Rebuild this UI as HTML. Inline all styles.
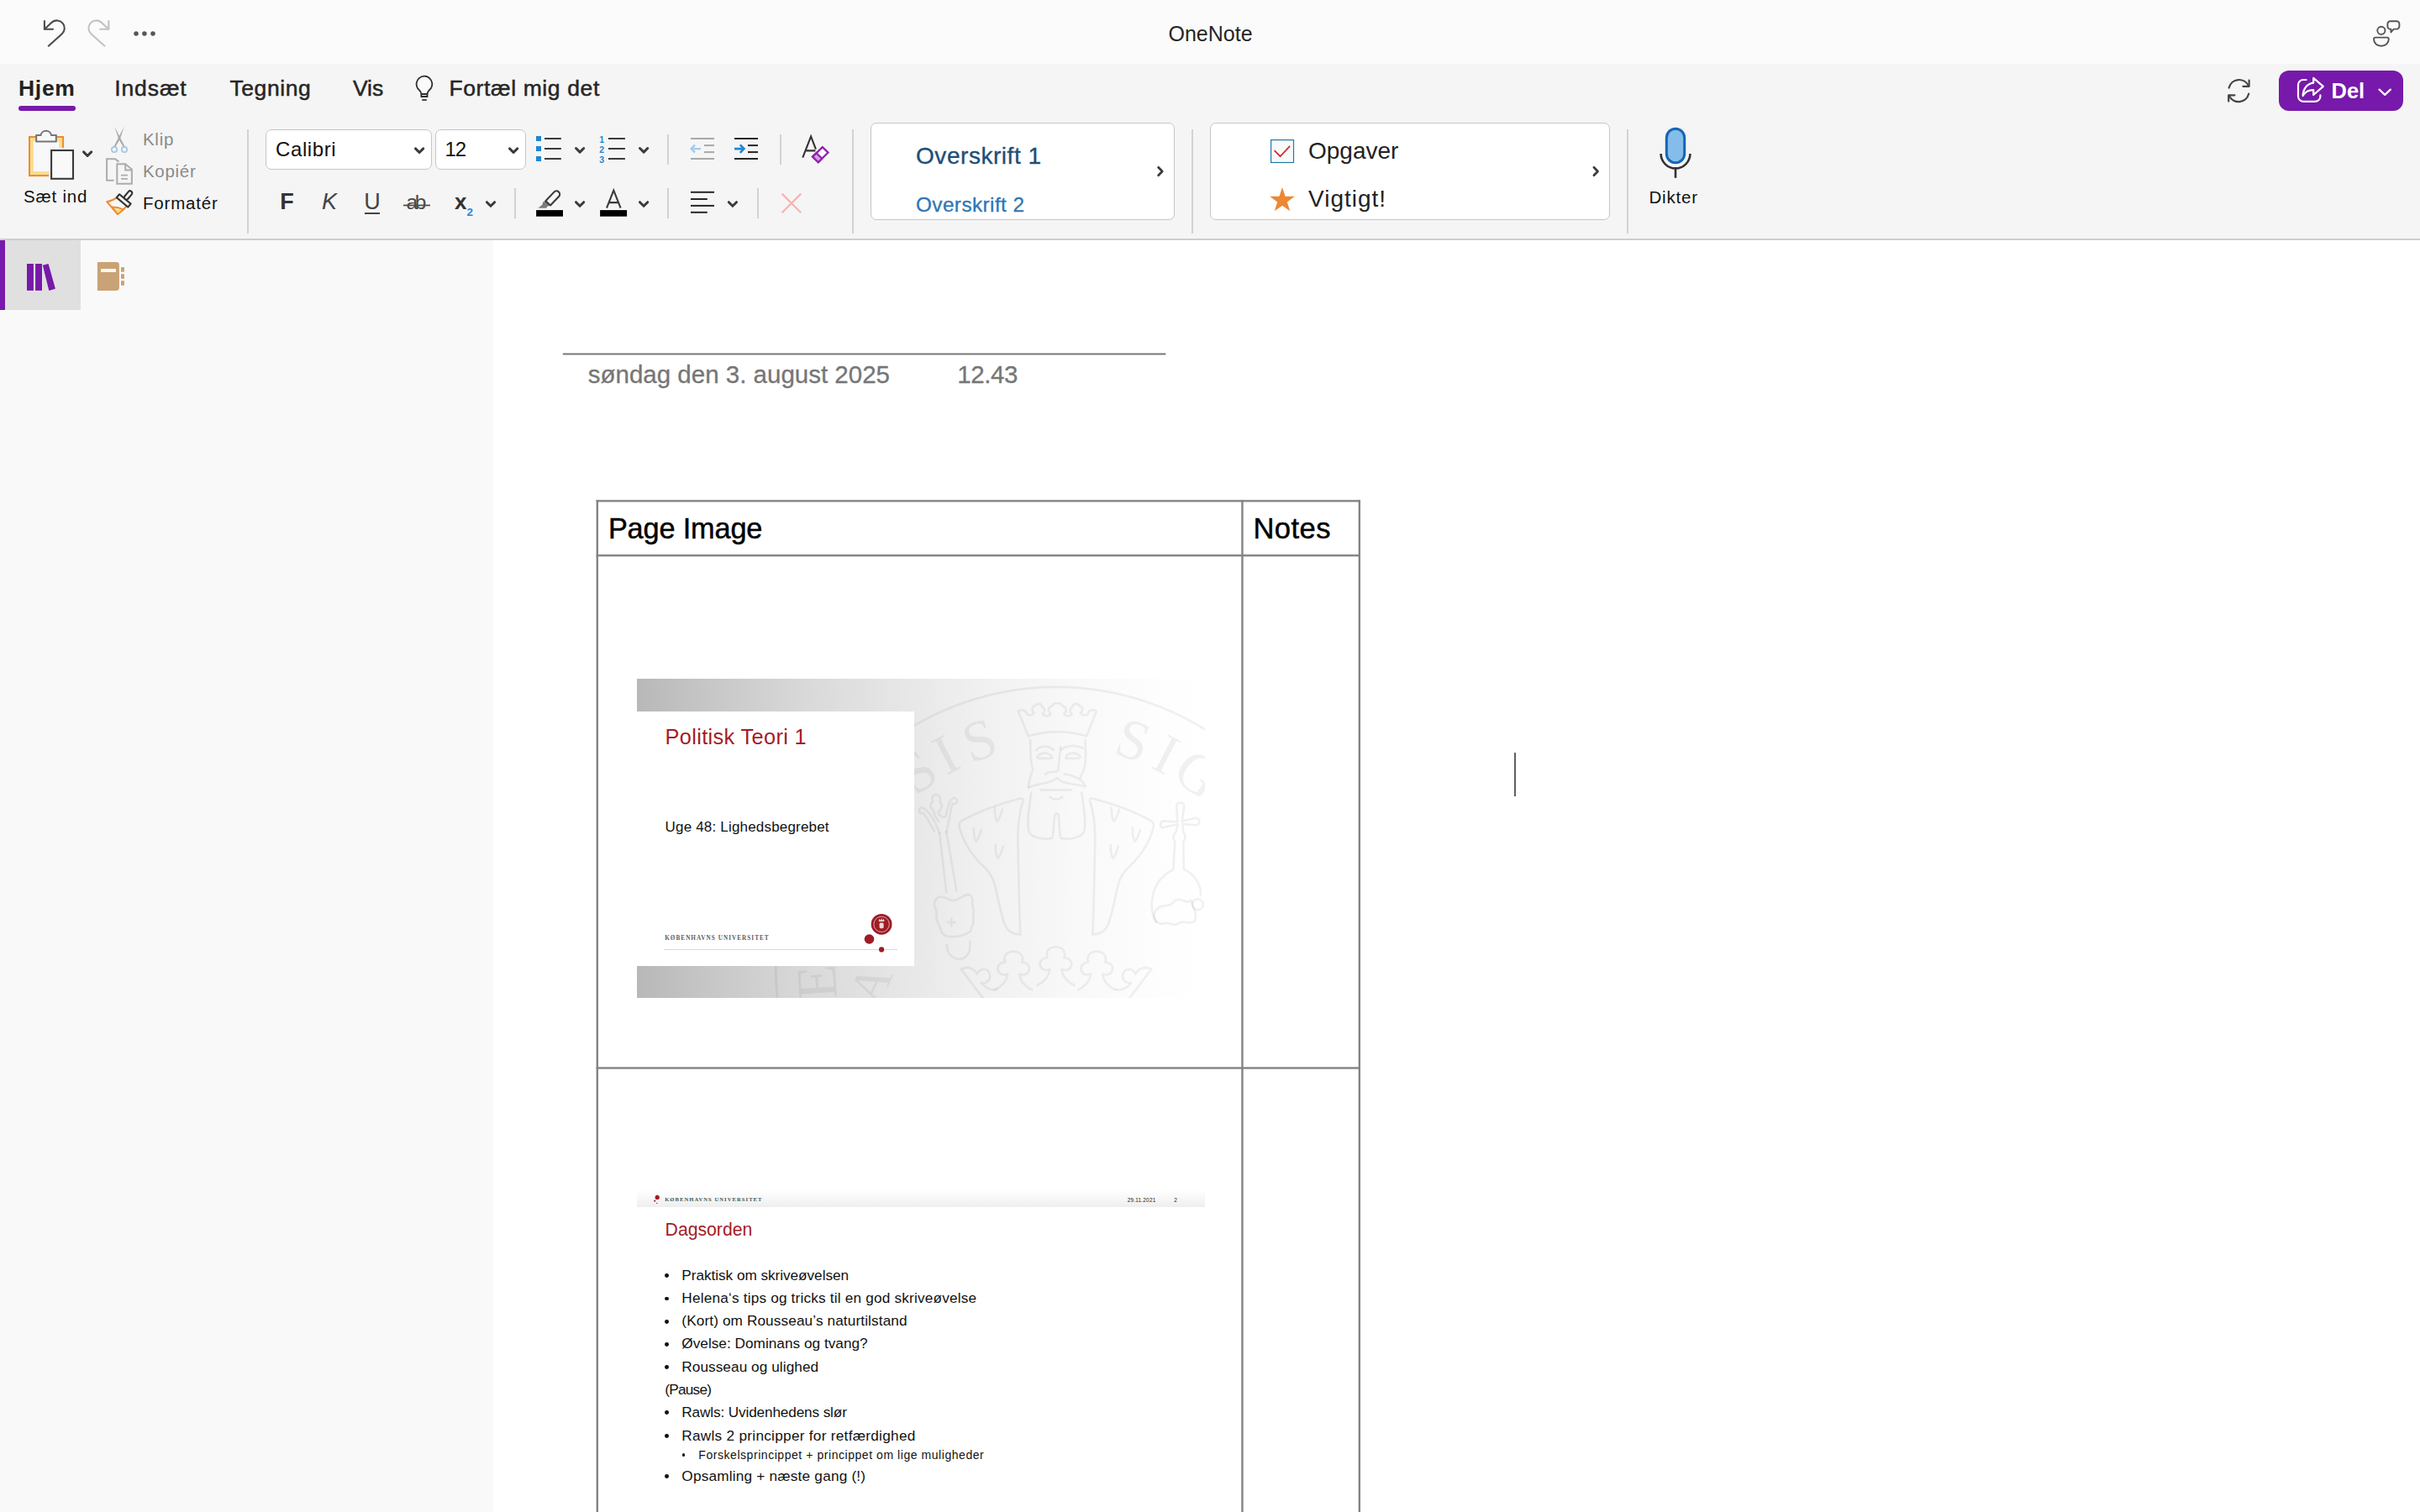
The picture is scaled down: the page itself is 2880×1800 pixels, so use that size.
<!DOCTYPE html>
<html lang="da"><head><meta charset="utf-8"><title>OneNote</title>
<style>
html,body{margin:0;padding:0;}
body{width:2880px;height:1800px;overflow:hidden;background:#fff;position:relative;font-family:"Liberation Sans",sans-serif;}
.t{position:absolute;white-space:nowrap;}
.b{position:absolute;box-sizing:border-box;}
svg{position:absolute;left:0;top:0;overflow:visible;}
.serif{font-family:"Liberation Serif",serif;}
@media (max-width:2000px){body{zoom:0.5;}}
</style></head><body>
<div class="b" style="left:0px;top:0px;width:2880px;height:76px;background:#fbfbfb;"></div>
<div class="b" style="left:0px;top:76px;width:2880px;height:208px;background:#f5f5f5;"></div>
<div class="b" style="left:0px;top:284px;width:2880px;height:2px;background:#cdcdcd;"></div>
<div class="b" style="left:0px;top:286px;width:587px;height:1514px;background:#f9f9f9;"></div>
<div class="b" style="left:0px;top:286px;width:96px;height:83px;background:#e0e0e0;"></div>
<div class="b" style="left:0px;top:286px;width:6px;height:83px;background:#7719aa;"></div>
<div class="t " style="left:1390.50px;top:28.44px;font-size:25px;line-height:25px;color:#262626;">OneNote</div>
<div class="t " style="left:22.00px;top:91.57px;font-size:26.5px;line-height:26.5px;color:#222;font-weight:bold;letter-spacing:0.7px;">Hjem</div>
<div class="b" style="left:22px;top:126px;width:68px;height:6px;background:#7719aa;border-radius:3px;"></div>
<div class="t " style="left:136.20px;top:91.57px;font-size:26.5px;line-height:26.5px;color:#262626;letter-spacing:0.9px;-webkit-text-stroke:0.5px #262626;">Indsæt</div>
<div class="t " style="left:273.40px;top:91.57px;font-size:26.5px;line-height:26.5px;color:#262626;letter-spacing:0.6px;-webkit-text-stroke:0.5px #262626;">Tegning</div>
<div class="t " style="left:419.90px;top:91.57px;font-size:26.5px;line-height:26.5px;color:#262626;-webkit-text-stroke:0.5px #262626;">Vis</div>
<div class="t " style="left:534.40px;top:91.57px;font-size:26.5px;line-height:26.5px;color:#262626;letter-spacing:0.62px;-webkit-text-stroke:0.5px #262626;">Fortæl mig det</div>
<div class="t " style="left:28.00px;top:224.25px;font-size:20.5px;line-height:20.5px;color:#111;letter-spacing:0.8px;">Sæt ind</div>
<div class="t " style="left:170.00px;top:156.45px;font-size:20.5px;line-height:20.5px;color:#8a8a8a;letter-spacing:0.7px;">Klip</div>
<div class="t " style="left:170.00px;top:193.65px;font-size:20.5px;line-height:20.5px;color:#8a8a8a;letter-spacing:0.7px;">Kopiér</div>
<div class="t " style="left:170.00px;top:231.95px;font-size:20.5px;line-height:20.5px;color:#111;letter-spacing:0.8px;">Formatér</div>
<div class="b" style="left:294px;top:154px;width:2px;height:124px;background:#d2d2d2;"></div>
<div class="b" style="left:316px;top:154px;width:198px;height:48px;background:#fff;border:1.5px solid #c6c6c6;border-radius:7px;"></div>
<div class="b" style="left:518px;top:154px;width:108px;height:48px;background:#fff;border:1.5px solid #c6c6c6;border-radius:7px;"></div>
<div class="t " style="left:328.00px;top:165.68px;font-size:24px;line-height:24px;color:#111;letter-spacing:0.6px;">Calibri</div>
<div class="t " style="left:529.60px;top:165.68px;font-size:24px;line-height:24px;color:#111;letter-spacing:-1.2px;">12</div>
<div class="t " style="left:333.20px;top:226.94px;font-size:27px;line-height:27px;color:#333;font-weight:bold;">F</div>
<div class="t " style="left:383.00px;top:226.94px;font-size:27px;line-height:27px;color:#444;font-style:italic;">K</div>
<div class="t " style="left:433.20px;top:226.94px;font-size:27px;line-height:27px;color:#444;">U</div>
<div class="b" style="left:434px;top:252.5px;width:18px;height:2px;background:#444;"></div>
<div class="t " style="left:483.60px;top:228.66px;font-size:24.5px;line-height:24.5px;color:#4a4a4a;letter-spacing:-3.45px;">ab</div>
<svg width="2880" height="300" viewBox="0 0 2880 300"><rect x="480" y="243.6" width="32" height="1.7" fill="#4a4a4a"/></svg>
<div class="t " style="left:541.00px;top:227.49px;font-size:26px;line-height:26px;color:#333;font-weight:bold;">x</div>
<div class="t " style="left:555.50px;top:246.17px;font-size:13.5px;line-height:13.5px;color:#2b88d8;font-weight:bold;">2</div>
<div class="b" style="left:612px;top:224px;width:2px;height:36px;background:#d2d2d2;"></div>
<div class="b" style="left:794px;top:160px;width:2px;height:36px;background:#d2d2d2;"></div>
<div class="b" style="left:794px;top:224px;width:2px;height:36px;background:#d2d2d2;"></div>
<div class="b" style="left:928px;top:160px;width:2px;height:36px;background:#d2d2d2;"></div>
<div class="b" style="left:900.5px;top:224px;width:2px;height:36px;background:#d2d2d2;"></div>
<div class="b" style="left:1014px;top:154px;width:2px;height:124px;background:#d2d2d2;"></div>
<div class="b" style="left:1418px;top:154px;width:2px;height:124px;background:#d2d2d2;"></div>
<div class="b" style="left:1936px;top:154px;width:2px;height:124px;background:#d2d2d2;"></div>
<div class="b" style="left:1036px;top:146px;width:362px;height:116px;background:#fff;border:1.5px solid #c6c6c6;border-radius:7px;"></div>
<div class="t " style="left:1090.00px;top:172.10px;font-size:28px;line-height:28px;color:#1e4e79;letter-spacing:0.55px;-webkit-text-stroke:0.35px #1e4e79;">Overskrift 1</div>
<div class="t " style="left:1090.00px;top:232.03px;font-size:24.3px;line-height:24.3px;color:#2e75b5;letter-spacing:0.432px;-webkit-text-stroke:0.3px #2e75b5;">Overskrift 2</div>
<div class="b" style="left:1440px;top:146px;width:476px;height:116px;background:#fff;border:1.5px solid #c6c6c6;border-radius:7px;"></div>
<div class="t " style="left:1557.00px;top:165.80px;font-size:28px;line-height:28px;color:#222;">Opgaver</div>
<div class="t " style="left:1557.00px;top:222.80px;font-size:28px;line-height:28px;color:#222;letter-spacing:1.0px;">Vigtigt!</div>
<div class="t " style="left:1962.50px;top:224.55px;font-size:20.5px;line-height:20.5px;color:#111;letter-spacing:0.8px;">Dikter</div>
<div class="b" style="left:2712px;top:84px;width:148px;height:48px;background:#7719aa;border-radius:12px;"></div>
<div class="t " style="left:2774.50px;top:96.21px;font-size:25.5px;line-height:25.5px;color:#fff;font-weight:bold;">Del</div>
<svg width="2880" height="400" viewBox="0 0 2880 400" fill="none"><path d="M52.9 24.3 V34.8 H63.8" stroke="#4a4a4a" stroke-width="2.1"/>
<path d="M53.5 34.3 L61.7 26.6 A9.1 9.1 0 0 1 73.6 40.5 L57.2 55.2" stroke="#4a4a4a" stroke-width="2.1" stroke-linejoin="round"/>
<path d="M129.3 24.3 V34.8 H118.4" stroke="#c2c2c2" stroke-width="2.1"/>
<path d="M128.7 34.3 L120.5 26.6 A9.1 9.1 0 0 0 108.6 40.5 L125 55.2" stroke="#c2c2c2" stroke-width="2.1" stroke-linejoin="round"/>
<circle cx="162" cy="40.1" r="2.75" fill="#555"/>
<circle cx="171.9" cy="40.1" r="2.75" fill="#555"/>
<circle cx="182" cy="40.1" r="2.75" fill="#555"/>
<path d="M501.4 112 C501.2 108.8 498.9 107.5 497.29 105.41 A9.35 9.35 0 1 1 512.61 105.41 C511 107.5 508.7 108.8 508.5 112 Z" fill="#fafafa" stroke="#2e2e2e" stroke-width="1.8" stroke-linejoin="round"/>
<path d="M501.4 112 V115 H508.5 V112" stroke="#2e2e2e" stroke-width="1.8" stroke-linejoin="miter"/>
<path d="M502.2 119 H507.9" stroke="#2e2e2e" stroke-width="1.7"/>
<rect x="35" y="163" width="40.1" height="46.1" fill="#f9dc8f" stroke="#ee8a2f" stroke-width="2"/>
<rect x="39.9" y="168.1" width="30.4" height="36" fill="#f8f8f8"/>
<path d="M43.2 168.6 V161.1 H48.5 A6.4 6.4 0 0 1 61.1 161.1 H66.8 V168.6 Z" fill="#f8f8f8" stroke="#757575" stroke-width="2" stroke-linejoin="miter"/>
<rect x="58" y="175.9" width="32" height="40" fill="#f5f5f5"/>
<rect x="61.1" y="179" width="25.9" height="33.8" fill="#f9f9f9" stroke="#3a3a3a" stroke-width="2.1"/>
<path d="M99.50 180.90 L104.10 185.50 L108.70 180.90" stroke="#3a3a3a" stroke-width="3.0" stroke-linecap="round" stroke-linejoin="round"/>
<path d="M136.1 150.6 L148.6 174.6 L146.9 175.2 L141.2 165.5 Z" fill="#a9a9a9"/>
<path d="M147.9 150.6 L135.4 174.6 L137.1 175.2 L142.8 165.5 Z" fill="#a9a9a9"/>
<circle cx="136" cy="178.1" r="3.2" stroke="#9fc6e6" stroke-width="1.6"/>
<circle cx="148" cy="178.1" r="3.2" stroke="#9fc6e6" stroke-width="1.6"/>
<path d="M141.4 192.6 L137.2 189.2 H127.1 V214.7 H135.6" stroke="#acacac" stroke-width="2" stroke-linejoin="miter"/>
<path d="M139.3 195.2 H149.2 L156.9 201.6 V218.8 H139.3 Z" stroke="#acacac" stroke-width="2" stroke-linejoin="miter" fill="#f5f5f5"/>
<path d="M149.2 195.2 V202.6 H156.9" stroke="#acacac" stroke-width="2"/>
<path d="M144 208.6 H151.9 M144 212.8 H151.9" stroke="#acacac" stroke-width="1.8"/>
<path d="M140.1 234.6 C134.5 238.5 131 239.6 127.2 240.2 L140 255 C144 252.5 147.5 249.5 150.3 245.6" stroke="#ee8a2f" stroke-width="2" stroke-linejoin="round" fill="#f8f8f8"/>
<path d="M133.6 246.4 C138 246.3 142.5 247.2 146.6 249.3 C144.7 251.3 142.5 253.2 140 254.8 Z" fill="#f9dc8f" stroke="#ee8a2f" stroke-width="1.6" stroke-linejoin="round"/>
<g transform="translate(147.2 238.9) rotate(40)"><rect x="-8.8" y="-2.6" width="17.6" height="5.2" fill="#f6f6f6" stroke="#333" stroke-width="2.1" stroke-linejoin="round"/><rect x="-2.5" y="-14.2" width="5" height="11.6" rx="2.3" fill="#f6f6f6" stroke="#333" stroke-width="2.1"/></g>
<path d="M494.50 176.90 L499.10 181.50 L503.70 176.90" stroke="#3a3a3a" stroke-width="3.0" stroke-linecap="round" stroke-linejoin="round"/>
<path d="M606.50 176.90 L611.10 181.50 L615.70 176.90" stroke="#3a3a3a" stroke-width="3.0" stroke-linecap="round" stroke-linejoin="round"/>
<rect x="638" y="162" width="6" height="6" fill="#1e88d2"/>
<rect x="648" y="164" width="19.8" height="2" fill="#3a3a3a"/>
<rect x="724" y="164" width="19.9" height="2" fill="#3a3a3a"/>
<rect x="638" y="174" width="6" height="6" fill="#1e88d2"/>
<rect x="648" y="176" width="19.8" height="2" fill="#3a3a3a"/>
<rect x="724" y="176" width="19.9" height="2" fill="#3a3a3a"/>
<rect x="638" y="186" width="6" height="6" fill="#1e88d2"/>
<rect x="648" y="188" width="19.8" height="2" fill="#3a3a3a"/>
<rect x="724" y="188" width="19.9" height="2" fill="#3a3a3a"/>
<path d="M685.50 176.50 L690.10 181.10 L694.70 176.50" stroke="#3a3a3a" stroke-width="3.0" stroke-linecap="round" stroke-linejoin="round"/>
<path d="M761.50 176.50 L766.10 181.10 L770.70 176.50" stroke="#3a3a3a" stroke-width="3.0" stroke-linecap="round" stroke-linejoin="round"/>
<rect x="822" y="164" width="28" height="2" fill="#a8a8a8"/>
<rect x="838" y="172.1" width="12" height="2" fill="#a8a8a8"/>
<rect x="838" y="180.1" width="12" height="2" fill="#a8a8a8"/>
<rect x="822" y="188" width="28" height="2" fill="#a8a8a8"/>
<rect x="874" y="164" width="28" height="2" fill="#262626"/>
<rect x="890" y="172.1" width="12" height="2" fill="#262626"/>
<rect x="890" y="180.1" width="12" height="2" fill="#262626"/>
<rect x="874" y="188" width="28" height="2" fill="#262626"/>
<path d="M834 177.1 H823.2 M827 172.6 L822.6 177.1 L827 181.6" stroke="#a4cbec" stroke-width="2.3" stroke-linejoin="miter"/>
<path d="M874 177.1 H884.8 M880.8 172.4 L885.5 177.1 L880.8 181.8" stroke="#1e88d2" stroke-width="2.6" stroke-linejoin="miter"/>
<path d="M955.3 187.6 L965.1 162.4 L970.9 177.6 M959.4 179.4 H970.4" stroke="#333" stroke-width="2.1" stroke-linejoin="miter"/>
<path d="M978.8 175.2 L985.5 181.6 L973.8 193.2 L967.1 186.6 Z" fill="#fdfdfd" stroke="#8e24aa" stroke-width="2.3" stroke-linejoin="miter"/>
<path d="M971.6 182.2 L978.2 188.8 L973.8 193.2 L967.1 186.6 Z" fill="#dc9be6" stroke="#8e24aa" stroke-width="2.3" stroke-linejoin="miter"/>
<path d="M579.40 240.70 L584.00 245.30 L588.60 240.70" stroke="#3a3a3a" stroke-width="3.0" stroke-linecap="round" stroke-linejoin="round"/>
<rect x="637.2" y="249.2" width="33.8" height="9.4" fill="#fafafa"/>
<rect x="638.1" y="250.1" width="31.9" height="7.6" fill="#000"/>
<path d="M648.8 238.9 L654.8 244.5 L650.9 246 L650.6 247.7 L640.4 247.7 L645.3 243.8 L646.3 240.6 Z" fill="#7c7c7c"/>
<g transform="translate(658.5 235.2) rotate(43.5)"><path d="M-3.9 9.2 V-5.4 A3.9 3.9 0 0 1 3.9 -5.4 V9.2 Z" fill="#f8f8f8" stroke="#3a3a3a" stroke-width="2.1" stroke-linejoin="round"/></g>
<path d="M685.50 240.70 L690.10 245.30 L694.70 240.70" stroke="#3a3a3a" stroke-width="3.0" stroke-linecap="round" stroke-linejoin="round"/>
<rect x="713.2" y="249.2" width="33.8" height="9.4" fill="#fafafa"/>
<rect x="714.1" y="250.1" width="32" height="7.6" fill="#000"/>
<path d="M722 247.7 L730.3 226.6 L738.6 247.7 M724.9 241.1 H735.7" stroke="#3a3a3a" stroke-width="2.1" stroke-linejoin="miter"/>
<path d="M761.50 240.70 L766.10 245.30 L770.70 240.70" stroke="#3a3a3a" stroke-width="3.0" stroke-linecap="round" stroke-linejoin="round"/>
<rect x="822" y="227.8" width="28" height="2" fill="#262626"/>
<rect x="822" y="236" width="19.8" height="2" fill="#262626"/>
<rect x="822" y="243.9" width="28" height="2" fill="#262626"/>
<rect x="822" y="251.8" width="19.8" height="2" fill="#262626"/>
<path d="M867.30 240.70 L871.90 245.30 L876.50 240.70" stroke="#3a3a3a" stroke-width="3.0" stroke-linecap="round" stroke-linejoin="round"/>
<path d="M930.6 230.6 L953.2 253.2 M953.2 230.6 L930.6 253.2" stroke="#f5b5b1" stroke-width="2.2"/>
<path d="M1378.60 199.30 L1383.20 204.00 L1378.60 208.70" stroke="#3a3a3a" stroke-width="2.7" stroke-linecap="round" stroke-linejoin="round"/>
<path d="M1896.90 199.30 L1901.50 204.00 L1896.90 208.70" stroke="#3a3a3a" stroke-width="2.7" stroke-linecap="round" stroke-linejoin="round"/>
<rect x="1512.6" y="166.6" width="26.9" height="26.9" fill="#f9f9f9" stroke="#1f7ca8" stroke-width="1.2"/>
<path d="M1516.6 179.2 L1523.6 186.2 L1535.1 173.8" stroke="#cf2a2a" stroke-width="1.7"/>
<polygon points="1526.00,222.90 1529.59,233.66 1540.93,233.75 1531.80,240.49 1535.23,251.30 1526.00,244.70 1516.77,251.30 1520.20,240.49 1511.07,233.75 1522.41,233.66" fill="#ed8733"/>
<path d="M1976.6 183 A17.4 17.4 0 0 0 2011.4 183" stroke="#333" stroke-width="2.6" />
<path d="M1994 200.6 V211.8" stroke="#333" stroke-width="2.6"/>
<rect x="1983.3" y="153.3" width="21.4" height="40.4" rx="10.7" fill="#85bdea" stroke="#1665b4" stroke-width="3"/>
<path d="M2652.6 104.6 A12.4 12.4 0 0 1 2676 102.4" stroke="#444" stroke-width="2.2" stroke-linecap="round"/>
<path d="M2676.6 95.6 V102.8 H2669.4" stroke="#444" stroke-width="2.2" stroke-linecap="round" stroke-linejoin="round"/>
<path d="M2676.2 111.6 A12.4 12.4 0 0 1 2652.8 113.8" stroke="#444" stroke-width="2.2" stroke-linecap="round"/>
<path d="M2652.2 120.6 V113.4 H2659.4" stroke="#444" stroke-width="2.2" stroke-linecap="round" stroke-linejoin="round"/>
<path d="M2744.6 95 H2741 A6 6 0 0 0 2735 101 V114.8 A6 6 0 0 0 2741 120.8 H2755.4 A6 6 0 0 0 2761.4 114.8 V113.4" stroke="#fff" stroke-width="2.2" stroke-linecap="round"/>
<path d="M2753.2 92.8 L2764.8 102.8 L2753.2 113 V107.2 C2747.5 107 2743.6 109.2 2740.6 114 C2741 105.6 2745.6 99.4 2753.2 98.6 Z" stroke="#fff" stroke-width="2.2" stroke-linejoin="round" fill="#7719aa"/>
<path d="M2831.6 106.6 L2838.2 112.8 L2844.8 106.6" stroke="#fff" stroke-width="2.3" stroke-linecap="round" stroke-linejoin="round"/>
<circle cx="2833.9" cy="36.3" r="4.6" stroke="#555" stroke-width="1.9"/>
<path d="M2825 46.6 C2825 44.9 2826 44.6 2827 44.6 H2840.8 C2841.8 44.6 2842.8 44.9 2842.8 46.6 C2842.8 51.6 2838.9 54.8 2833.9 54.8 C2828.9 54.8 2825 51.6 2825 46.6 Z" stroke="#555" stroke-width="1.9"/>
<path d="M2844.6 25.2 H2852.2 A3.2 3.2 0 0 1 2855.4 28.4 V31.4 A3.2 3.2 0 0 1 2852.2 34.6 H2848.8 L2845.4 38.4 V34.6 H2844.6 A3.2 3.2 0 0 1 2841.4 31.4 V28.4 A3.2 3.2 0 0 1 2844.6 25.2 Z" stroke="#555" stroke-width="1.9" stroke-linejoin="round"/>
<rect x="32" y="314" width="7.9" height="31.9" fill="#7719aa"/>
<rect x="42.1" y="314" width="7.9" height="31.9" fill="#7719aa"/>
<polygon points="50.8,315.7 57.6,314 65.9,343.8 58.3,345.9" fill="#7719aa"/>
<path d="M115.9 312.1 H138.6 A3.3 3.3 0 0 1 141.9 315.4 V342.6 A3.3 3.3 0 0 1 138.6 345.9 H115.9 Z" fill="#c9a275"/>
<rect x="120" y="320" width="18" height="4" fill="#fcf7f0"/>
<rect x="144" y="318.1" width="3.9" height="5.6" fill="#c9a275"/>
<rect x="144" y="326.2" width="3.9" height="5.6" fill="#c9a275"/>
<rect x="144" y="334.2" width="3.9" height="5.6" fill="#c9a275"/></svg>
<div class="t " style="left:713.20px;top:160.91px;font-size:10.5px;line-height:10.5px;color:#1e88d2;font-weight:bold;">1</div>
<div class="t " style="left:713.20px;top:172.81px;font-size:10.5px;line-height:10.5px;color:#1e88d2;font-weight:bold;">2</div>
<div class="t " style="left:713.20px;top:184.81px;font-size:10.5px;line-height:10.5px;color:#1e88d2;font-weight:bold;">3</div>
<svg width="2880" height="600" viewBox="0 0 2880 600"><rect x="669.8" y="420.45" width="717.5" height="2.0" fill="#767676"/></svg>
<div class="t " style="left:699.80px;top:431.03px;font-size:29.5px;line-height:29.5px;color:#767676;letter-spacing:-0.002px;-webkit-text-stroke:0.3px #767676;">søndag den 3. august 2025</div>
<div class="t " style="left:1139.20px;top:431.03px;font-size:29.5px;line-height:29.5px;color:#767676;letter-spacing:-0.387px;-webkit-text-stroke:0.3px #767676;">12.43</div>
<svg width="2880" height="1800" viewBox="0 0 2880 1800" fill="none"><rect x="709.6" y="595.2" width="909.4" height="2.35" fill="#848382"/><rect x="709.6" y="660.1" width="909.4" height="2.4" fill="#848382"/><rect x="709.6" y="1270.25" width="909.4" height="2.4" fill="#848382"/><rect x="709.6" y="595.2" width="2.4" height="1205" fill="#848382"/><rect x="1477.25" y="595.2" width="2.4" height="1205" fill="#848382"/><rect x="1616.65" y="595.2" width="2.35" height="1205" fill="#848382"/></svg>
<div class="t " style="left:723.90px;top:611.87px;font-size:34.3px;line-height:34.3px;color:#000;letter-spacing:-0.156px;-webkit-text-stroke:0.45px #000;">Page Image</div>
<div class="t " style="left:1491.50px;top:611.81px;font-size:34.6px;line-height:34.6px;color:#000;letter-spacing:0.4px;-webkit-text-stroke:0.45px #000;">Notes</div>
<div class="b" style="left:1802px;top:896px;width:2px;height:52px;background:#606060;"></div>
<div class="b" style="left:758.2px;top:808.2px;width:675.4px;height:380.1px;overflow:hidden;background:linear-gradient(90deg,#b8b8b8 0%,#c8c8c8 14%,#d9d9d9 30%,#e6e6e6 46%,#f0f0f0 60%,#f8f8f8 76%,#fdfdfd 90%,#ffffff 100%);"><svg style="left:0;top:0" width="675.4" height="380.1" viewBox="758.2 808.2 675.4 380.1" fill="none"><g stroke="#000" stroke-opacity="0.055" stroke-width="2.7" stroke-linecap="round" stroke-linejoin="round"><circle cx="1257.4" cy="1152" r="334"/><path d="M1224 876.5 Q1258.5 866 1293.2 876.5 L1305 847 C1300 843.5 1296 846 1294.5 850.5 C1291 852.5 1287.5 851.5 1286 849 C1289.5 846.5 1289 841.5 1285 840.5 C1282.5 836.5 1277 837.5 1276.5 842 C1272.5 843.5 1273 848 1276 850 C1273.5 853.5 1268.5 853.5 1266.5 850 C1270.5 847 1269.5 841.5 1265 841 C1263.5 836 1253.5 836 1252 841 C1247.5 841.5 1246.5 847 1250.5 850 C1248.5 853.5 1243.5 853.5 1241 850 C1244 848 1244.5 843.5 1240.5 842 C1240 837.5 1234.5 836.5 1232 840.5 C1228 841.5 1227.5 846.5 1231 849 C1229.5 851.5 1226 852.5 1222.500 850.5 C1221 846 1217 843.5 1212 847 Z"/><path d="M1226.2 881 C1227.5 895 1225 905 1229.5 916 C1227.5 922 1224.5 928 1224.2 937.5"/><path d="M1291.6 881 C1291.5 893 1294.5 903 1290 916 C1288.5 921 1286.5 923 1286 926"/><path d="M1233 893.5 C1238 887.5 1248 887 1254 893 M1234.5 901.5 C1238 895.5 1249 895 1252.5 902 M1236 903 H1251"/><path d="M1263 892.5 C1271 887 1281 887 1289 891 M1268.5 902 C1270.500 895.5 1282 895 1286 901 M1269 903 H1284"/><path d="M1262.5 889 C1261 900 1260.5 910 1259.5 917.5 C1254 921 1249 917 1244.500 922"/><path d="M1267 921.5 C1277 923 1288 927 1292 936.5 C1285 934 1270 934 1262.500 930 C1259.500 927.5 1258 925.5 1256.5 927.5 C1252.500 932 1235 933 1224.2 937.5"/><path d="M1239 940.6 H1275 M1249.5 949 Q1257 955 1264.500 949"/><path d="M1227.5 944 C1225 960 1222 978 1224.500 990 C1228 998.500 1245 1000 1252.500 998 C1254.5 990 1254 978 1255.500 970 Q1257.600 967 1259.700 970 C1261 978 1260.500 990 1262.500 998 C1270 1000 1287 998.5 1290.500 990 C1293 978 1290 960 1287.500 944"/><path d="M1216 950.5 C1190 957 1165 966 1144.500 977.5 C1140.500 980 1141.500 985 1143.500 990 C1150 1010 1162 1024 1173 1034 C1182 1043 1184 1052 1186 1062 C1189 1075 1192 1090 1196 1101 C1199 1108 1205 1112.500 1214.500 1112.800 C1213 1080 1212.500 1040 1211.500 1000 C1211.500 985 1213.500 966 1218 952.5 Z"/><path d="M1299 950.5 C1325 957 1350 966 1370.500 977.5 C1374.500 980 1373.500 985 1371.500 990 C1365 1010 1353 1024 1342 1034 C1333 1043 1331 1052 1329 1062 C1326 1075 1323 1090 1319 1101 C1316 1108 1310 1112.500 1300.500 1112.800 C1302 1080 1302.500 1040 1303.500 1000 C1303.500 985 1301.500 966 1297 952.5 Z"/><path d="M1184 962 C1184 970 1185 976 1187 978 C1190 974 1192 968 1193 964"/><path d="M1159 986 C1159 994 1160 1000 1162 1002 C1165 998 1167 992 1168 988"/><path d="M1185 1006 C1185 1014 1186 1020 1188 1022 C1191 1018 1193 1012 1194 1008"/><path d="M1323 962 C1323 970 1324 976 1326 978 C1329 974 1331 968 1332 964"/><path d="M1348 986 C1348 994 1349 1000 1351 1002 C1354 998 1356 992 1357 988"/><path d="M1322 1006 C1322 1014 1323 1020 1325 1022 C1328 1018 1330 1012 1331 1008"/><path d="M1118.300 992 L1126.400 1062.500 M1126.400 990.600 L1138.600 1061"/><path d="M1118.300 992 C1112 975 1106 965 1097.500 961.500 C1092 962 1093.500 969 1099 968.500 C1105 975 1109 984 1112 990 M1126.400 990.600 C1130 978 1131 966 1133.500 957 C1140 958 1141.500 951 1136 950 C1130 951 1128 960 1126 972 C1122 974 1118 972 1116.500 967 C1122 963 1122.500 957 1118.500 955.500 C1120.500 951 1118.500 946 1113.500 946.500 C1109.500 947 1108.500 951.500 1110.500 955 C1106.500 957 1106.500 962.500 1110.500 964 C1112 969 1114 974 1117 978"/><path d="M1114 1071 C1118 1064 1126 1070 1133 1072 C1142 1074 1148 1062 1155 1066 C1160 1070 1156 1076 1158 1080 C1161 1086 1157 1090 1158.500 1095 C1160 1100 1155 1104 1156 1108 C1150 1114 1136 1117 1126 1114.500 C1119 1112 1120 1104 1117 1100 C1113 1094 1116 1088 1114 1082 C1111 1078 1112 1074 1114 1071 Z M1128 1098 H1137 M1132.500 1093.500 V1102.500"/><path d="M1127 1125 C1127 1136 1134 1142 1142 1142 C1150 1142 1156 1134 1154.500 1121"/><path d="M1376 1098 C1366 1080 1370 1048 1396.500 1035.500 L1398.500 1002 C1395.500 998 1396.500 994 1399.500 991 L1402 981.500 L1384 985.500 C1380 985 1380 978 1385 977.500 L1401.500 978.500 L1400.500 960 C1401 954.500 1409 954.500 1409.500 960 L1407 978 L1423 974 C1428.500 974 1429 981 1424 982.500 L1407.500 981 L1408.500 991 C1411.500 994 1411.500 999 1408.500 1002 L1409 1035 C1424 1042 1430 1056 1429 1066"/><path d="M1376 1084 C1384 1074 1392 1082 1397 1074 C1404 1066 1412 1078 1418 1072 C1421 1084 1426 1090 1421.500 1097 C1414 1102 1408 1094 1402 1100 C1396 1104 1390 1096 1384 1100 C1376 1100 1370 1092 1376 1084 Z"/><circle cx="1425.500" cy="1077" r="6.500"/><path d="M1184.4 1178.6 C1192.4 1174.6 1198.4 1168.6 1199.4 1159.6 C1186.4 1164.6 1182.4 1146.6 1196.4 1145.6 C1190.4 1128.6 1222.4 1128.6 1216.4 1145.6 C1230.4 1146.6 1226.4 1164.6 1213.4 1159.6 C1214.4 1168.6 1220.4 1174.6 1228.4 1178.6"/><path d="M1234.6 1173.2 C1242.6 1169.2 1248.6 1163.2 1249.6 1154.2 C1236.6 1159.2 1232.6 1141.2 1246.6 1140.2 C1240.6 1123.2 1272.6 1123.2 1266.6 1140.2 C1280.6 1141.2 1276.6 1159.2 1263.6 1154.2 C1264.6 1163.2 1270.6 1169.2 1278.6 1173.2"/><path d="M1283.4 1178.6 C1291.4 1174.6 1297.4 1168.6 1298.4 1159.6 C1285.4 1164.6 1281.4 1146.6 1295.4 1145.6 C1289.4 1128.6 1321.4 1128.6 1315.4 1145.6 C1329.4 1146.6 1325.4 1164.6 1312.4 1159.6 C1313.4 1168.6 1319.4 1174.6 1327.4 1178.6"/><path d="M1144 1154 L1170 1188.300 M1144 1154 C1152 1150 1160 1153 1163 1160 C1166 1152 1176 1152 1178 1160 C1180 1168 1172 1172 1168 1170 C1172 1176 1180 1180 1186 1178"/><path d="M1370.500 1154 L1344.500 1188.300 M1370.500 1154 C1362.500 1150 1354.500 1153 1351.500 1160 C1348.500 1152 1338.500 1152 1336.500 1160 C1334.500 1168 1342.500 1172 1346.500 1170 C1342.500 1176 1334.500 1180 1328.500 1178"/></g><g fill="#000" fill-opacity="0.055" font-family="'Liberation Serif',serif"><text transform="rotate(-35.4 1257.4 1152)" x="1257.4" y="889" text-anchor="middle" font-size="68">S</text><text transform="rotate(-27.4 1257.4 1152)" x="1257.4" y="889" text-anchor="middle" font-size="68">I</text><text transform="rotate(-18.7 1257.4 1152)" x="1257.4" y="889" text-anchor="middle" font-size="68">S</text><text transform="rotate(18.7 1257.4 1152)" x="1257.4" y="889" text-anchor="middle" font-size="68">S</text><text transform="rotate(27.3 1257.4 1152)" x="1257.4" y="889" text-anchor="middle" font-size="68">I</text><text transform="rotate(36.2 1257.4 1152)" x="1257.4" y="889" text-anchor="middle" font-size="68">G</text><text transform="rotate(-93.5 1257.4 1152)" x="1257.4" y="889" text-anchor="middle" font-size="68">E</text><text transform="rotate(-103.5 1257.4 1152)" x="1257.4" y="889" text-anchor="middle" font-size="68">A</text><text transform="rotate(-84 1257.4 1152)" x="1257.4" y="889" text-anchor="middle" font-size="68">T</text><text transform="translate(1046 1200) rotate(-66)" font-size="60">A</text></g></svg></div>
<div class="b" style="left:758.2px;top:846.5px;width:330.0999999999999px;height:303.4000000000001px;background:#fff;"></div>
<div class="t " style="left:791.60px;top:865.18px;font-size:25.3px;line-height:25.3px;color:#a51c24;letter-spacing:0.363px;">Politisk Teori 1</div>
<div class="t " style="left:791.60px;top:975.81px;font-size:17.0px;line-height:17.0px;color:#111;letter-spacing:0.182px;">Uge 48: Lighedsbegrebet</div>
<div class="t serif" style="left:791.20px;top:1114.31px;font-size:7.2px;line-height:7.2px;color:#606060;font-weight:bold;letter-spacing:1.045px;">KØBENHAVNS UNIVERSITET</div>
<div class="b" style="left:789.6px;top:1129.8px;width:278.5px;height:1px;background:#ecd0d0;"></div>
<svg width="2880" height="1800" viewBox="0 0 2880 1800" fill="none"><circle cx="1049.1" cy="1100.3" r="12.4" fill="#9d1c25"/><circle cx="1049.1" cy="1100.3" r="9.2" stroke="#e9c9cb" stroke-width="0.8"/><path d="M1045.6 1097 L1046.6 1093.6 L1048 1096 L1049.1 1092.8 L1050.2 1096 L1051.6 1093.6 L1052.6 1097 Z" fill="#f0d8d9"/><rect x="1046.6" y="1098.6" width="5" height="6.6" rx="1.4" fill="#f0d8d9"/><circle cx="1034.5" cy="1118" r="5.8" fill="#9d1c25"/><circle cx="1049.1" cy="1130.4" r="3.1" fill="#9d1c25"/></svg>
<div class="b" style="left:758.2px;top:1416.2px;width:675.4px;height:20.799999999999955px;background:linear-gradient(180deg,#ffffff 0%,#f9f9f9 40%,#eeeeee 100%);"></div>
<svg width="2880" height="1800" viewBox="0 0 2880 1800" fill="none"><circle cx="782.2" cy="1425.4" r="2.6" fill="#9d1c25"/><circle cx="779.2" cy="1429.6" r="1.1" fill="#9d1c25"/><circle cx="781.8" cy="1432.4" r="0.7" fill="#9d1c25"/></svg>
<div class="t serif" style="left:791.20px;top:1425.41px;font-size:6.6px;line-height:6.6px;color:#3c5a58;font-weight:bold;letter-spacing:1.055px;">KØBENHAVNS UNIVERSITET</div>
<div class="t " style="left:1341.80px;top:1425.58px;font-size:6.4px;line-height:6.4px;color:#222;letter-spacing:0.211px;">29.11.2021</div>
<div class="t " style="left:1397.20px;top:1425.58px;font-size:6.4px;line-height:6.4px;color:#222;">2</div>
<div class="t " style="left:791.60px;top:1453.15px;font-size:21.2px;line-height:21.2px;color:#a51c24;letter-spacing:0.006px;">Dagsorden</div>
<div class="b" style="left:791.3000000000001px;top:1516.3999999999999px;width:4.8px;height:4.8px;border-radius:50%;background:#111;"></div>
<div class="t " style="left:811.30px;top:1509.64px;font-size:17.2px;line-height:17.2px;color:#111;letter-spacing:-0.035px;">Praktisk om skriveøvelsen</div>
<div class="b" style="left:791.3000000000001px;top:1543.6px;width:4.8px;height:4.8px;border-radius:50%;background:#111;"></div>
<div class="t " style="left:811.30px;top:1536.84px;font-size:17.2px;line-height:17.2px;color:#111;letter-spacing:0.19px;">Helena‘s tips og tricks til en god skriveøvelse</div>
<div class="b" style="left:791.3000000000001px;top:1570.7999999999997px;width:4.8px;height:4.8px;border-radius:50%;background:#111;"></div>
<div class="t " style="left:811.30px;top:1564.04px;font-size:17.2px;line-height:17.2px;color:#111;letter-spacing:0.121px;">(Kort) om Rousseau’s naturtilstand</div>
<div class="b" style="left:791.3000000000001px;top:1597.9999999999998px;width:4.8px;height:4.8px;border-radius:50%;background:#111;"></div>
<div class="t " style="left:811.30px;top:1591.24px;font-size:17.2px;line-height:17.2px;color:#111;letter-spacing:0.026px;">Øvelse: Dominans og tvang?</div>
<div class="b" style="left:791.3000000000001px;top:1625.2999999999997px;width:4.8px;height:4.8px;border-radius:50%;background:#111;"></div>
<div class="t " style="left:811.30px;top:1618.54px;font-size:17.2px;line-height:17.2px;color:#111;letter-spacing:0.072px;">Rousseau og ulighed</div>
<div class="b" style="left:791.3000000000001px;top:1679.3999999999999px;width:4.8px;height:4.8px;border-radius:50%;background:#111;"></div>
<div class="t " style="left:811.30px;top:1672.64px;font-size:17.2px;line-height:17.2px;color:#111;letter-spacing:-0.133px;">Rawls: Uvidenhedens slør</div>
<div class="b" style="left:791.3000000000001px;top:1707.2999999999997px;width:4.8px;height:4.8px;border-radius:50%;background:#111;"></div>
<div class="t " style="left:811.30px;top:1700.54px;font-size:17.2px;line-height:17.2px;color:#111;letter-spacing:0.281px;">Rawls 2 principper for retfærdighed</div>
<div class="b" style="left:791.3000000000001px;top:1755.3999999999999px;width:4.8px;height:4.8px;border-radius:50%;background:#111;"></div>
<div class="t " style="left:811.30px;top:1748.64px;font-size:17.2px;line-height:17.2px;color:#111;letter-spacing:0.21px;">Opsamling + næste gang (!)</div>
<div class="t " style="left:791.20px;top:1645.94px;font-size:17.2px;line-height:17.2px;color:#111;letter-spacing:-0.742px;">(Pause)</div>
<div class="b" style="left:811.5px;top:1730.3px;width:3.8px;height:3.8px;border-radius:50%;background:#111;"></div>
<div class="t " style="left:831.30px;top:1724.95px;font-size:14.0px;line-height:14.0px;color:#111;letter-spacing:0.551px;">Forskelsprincippet + princippet om lige muligheder</div>
</body></html>
